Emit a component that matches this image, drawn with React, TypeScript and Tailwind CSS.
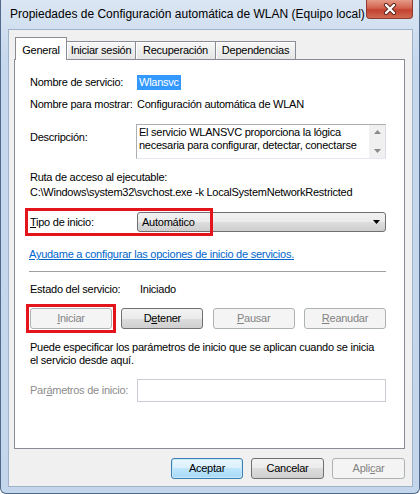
import React from "react";

function WinButton({
  children,
  disabled,
  primary,
  className = "",
}: {
  children: React.ReactNode;
  disabled?: boolean;
  primary?: boolean;
  className?: string;
}) {
  let look =
    "border-[#707070] text-black bg-[linear-gradient(#f2f2f2_0%,#ebebeb_50%,#dddddd_50%,#cfcfcf_100%)]";
  if (disabled) look = "border-[#adb2b5] text-[#838383] bg-[#f4f4f4]";
  if (primary)
    look =
      "border-[#3c7fb1] text-black bg-[linear-gradient(#eaf6fd_0%,#d9f0fc_50%,#bee6fd_50%,#a7d9f5_100%)] shadow-[inset_0_0_0_1px_#c8e8f8]";
  return (
    <div
      className={`flex items-center justify-center rounded-[3px] border leading-none ${look} ${className}`}
    >
      {children}
    </div>
  );
}

function Tab({ label, active, width }: { label: string; active?: boolean; width: string }) {
  if (active)
    return (
      <div
        className={`relative z-10 -mb-px flex h-[23px] items-start justify-center border border-b-0 border-[#898c95] bg-white pt-[4px] ${width}`}
      >
        {label}
      </div>
    );
  return (
    <div
      className={`-ml-px flex h-[18px] items-center justify-center border border-b-0 border-[#898c95] bg-[linear-gradient(#f7f7f7,#e5e5e5)] shadow-[inset_1px_1px_0_#ffffff] first:ml-0 ${width}`}
    >
      {label}
    </div>
  );
}

export default function App() {
  return (
    <div className="h-[494px] w-[420px] bg-white font-['Liberation_Sans',Arial,sans-serif] text-[11px] tracking-[-0.25px] text-black">
      <div className="flex h-[494px] w-[420px] flex-col rounded-b-[6px] border-x border-b border-[#51698a] bg-[linear-gradient(#dbe6f3,#c6d8ed_60px,#c3d6ec)]">
        {/* title bar */}
        <div className="flex h-[29px] items-start justify-between">
          <div className="pl-[9px] pt-[7px] text-[12px] leading-[15px] tracking-normal">
            Propiedades de Configuración automática de WLAN (Equipo local)
          </div>
          <div className="mr-[6px] flex h-[19px] w-[47px] items-center justify-center rounded-b-[4px] border border-t-0 border-[#8b3b2f] bg-[linear-gradient(#e59a88_0%,#d2624f_45%,#c3412f_55%,#d06a52_100%)]">
            <svg width="14" height="12" viewBox="0 0 14 12">
              <path d="M3 2 L11 10 M11 2 L3 10" stroke="#5a2018" strokeWidth="4.2" strokeLinecap="round" />
              <path d="M3 2 L11 10 M11 2 L3 10" stroke="#ffffff" strokeWidth="2.4" strokeLinecap="round" />
            </svg>
          </div>
        </div>

        {/* client area */}
        <div className="ml-[7px] flex h-[458px] w-[405px] flex-col border border-[#9fb2c8] bg-[#f0f0f0] pl-[5px] pt-[7px]">
          <div className="flex h-[22px] items-end pl-px">
            <Tab label="General" active width="w-[52px]" />
            <Tab label="Iniciar sesión" width="w-[70px]" />
            <Tab label="Recuperación" width="w-[81px]" />
            <Tab label="Dependencias" width="w-[81px]" />
          </div>

          {/* panel */}
          <div className="flex h-[390px] w-[391px] flex-col border border-[#898c95] bg-white pl-[15px] pr-[18px] leading-[15px]">
            <div className="mt-[15px] flex whitespace-nowrap">
              <div className="w-[107px]">Nombre de servicio:</div>
              <div className="bg-[#3399ff] px-[2px] text-white">Wlansvc</div>
            </div>
            <div className="mt-[7px] flex whitespace-nowrap">
              <div className="w-[107px]">Nombre para mostrar:</div>
              <div>Configuración automática de WLAN</div>
            </div>
            <div className="mt-[12px] flex">
              <div className="w-[106px] pt-[6px]">Descripción:</div>
              <div className="flex h-[35px] flex-1 border border-[#abadb3] border-r-[#dbdfe6] border-b-[#e3e9ef] bg-white">
                <div className="flex-1 pl-[2px] pt-px leading-[13px]">
                  El servicio WLANSVC proporciona la lógica
                  <br />
                  necesaria para configurar, detectar, conectarse
                </div>
                <div className="flex w-[16px] flex-col items-center justify-between bg-[#f0f0f0] py-[5px]">
                  <svg width="7" height="4" viewBox="0 0 7 4">
                    <path d="M0 4 L3.5 0 L7 4 Z" fill="#8a8a8a" />
                  </svg>
                  <svg width="7" height="4" viewBox="0 0 7 4">
                    <path d="M0 0 L3.5 4 L7 0 Z" fill="#8a8a8a" />
                  </svg>
                </div>
              </div>
            </div>
            <div className="mt-[11px]">Ruta de acceso al ejecutable:</div>
            <div className="whitespace-nowrap">C:\Windows\system32\svchost.exe -k LocalSystemNetworkRestricted</div>

            <div className="relative mt-[12px] flex h-[20px] items-center">
              <div className="pointer-events-none absolute left-[-5px] top-[-4px] h-[28px] w-[188px] border-[3px] border-[#e3141c]" />
              <div className="w-[107px]">
                <span className="underline">T</span>ipo de inicio:
              </div>
              <div className="flex h-[20px] flex-1 items-center justify-between rounded-[3px] border border-[#707070] bg-[linear-gradient(#f2f2f2_0%,#ebebeb_50%,#dddddd_50%,#cfcfcf_100%)] pl-[4px] pr-[5px]">
                <span>Automático</span>
                <svg width="7" height="4" viewBox="0 0 7 4">
                  <path d="M0 0 L7 0 L3.5 4 Z" fill="#000" />
                </svg>
              </div>
            </div>

            <div className="mt-[15px] -ml-px whitespace-nowrap text-[#0066cc] underline">
              Ayudame a configurar las opciones de inicio de servicios.
            </div>
            <div className="mt-[9px] -ml-px h-px bg-[#a0a0a0]" />

            <div className="mt-[10px] flex">
              <div className="w-[110px]">Estado del servicio:</div>
              <div>Iniciado</div>
            </div>

            <div className="mt-[11px] flex h-[21px] justify-between">
              <div className="relative">
                <div className="pointer-events-none absolute left-[-4px] top-[-4px] h-[29px] w-[90px] border-[3px] border-[#e3141c]" />
                <WinButton disabled className="h-[21px] w-[82px]">
                  <span className="underline">I</span>niciar
                </WinButton>
              </div>
              <WinButton className="h-[21px] w-[82px]">
                D<span className="underline">e</span>tener
              </WinButton>
              <WinButton disabled className="h-[21px] w-[82px]">
                <span className="underline">P</span>ausar
              </WinButton>
              <WinButton disabled className="h-[21px] w-[82px]">
                <span className="underline">R</span>eanudar
              </WinButton>
            </div>

            <div className="mt-[12px] whitespace-nowrap leading-[13px]">
              Puede especificar los parámetros de inicio que se aplican cuando se inicia
              <br />
              el servicio desde aquí.
            </div>

            <div className="mt-[12px] flex items-center">
              <div className="w-[107px] whitespace-nowrap text-[#8c8c8c]">
                Par<span className="underline">á</span>metros de inicio:
              </div>
              <div className="h-[23px] flex-1 border border-[#c9ccd2] bg-white" />
            </div>
          </div>

          <div className="mt-[9px] flex w-[391px] justify-end gap-[8px]">
            <WinButton primary className="h-[21px] w-[72px]">
              Aceptar
            </WinButton>
            <WinButton className="h-[21px] w-[73px]">Cancelar</WinButton>
            <WinButton disabled className="h-[21px] w-[73px]">
              Apli<span className="underline">c</span>ar
            </WinButton>
          </div>
        </div>
      </div>
    </div>
  );
}
